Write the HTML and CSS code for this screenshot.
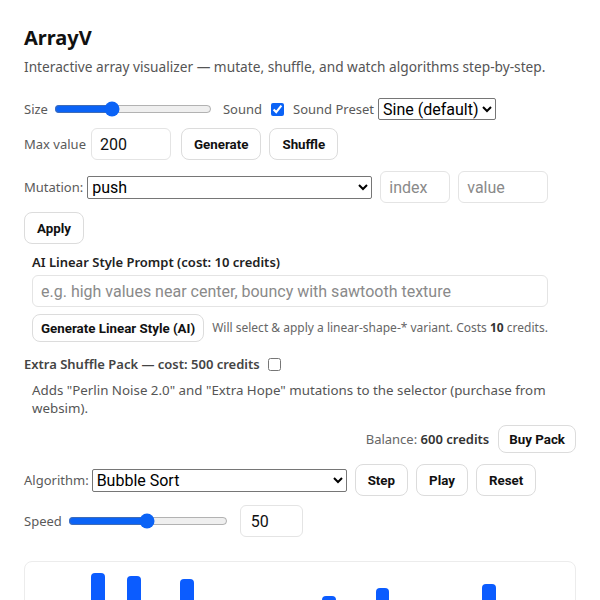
FILE: index.html
```html
<!DOCTYPE html>
<html lang="en">
<head>
<meta charset="utf-8">
<title>ArrayV</title>
<link rel="stylesheet" href="styles.css">
</head>
<body>
<main class="app">
  <h1 class="title">ArrayV</h1>
  <p class="subtitle">Interactive array visualizer — mutate, shuffle, and watch algorithms step-by-step.</p>

  <div class="row row-size">
    <span class="lbl">Size</span>
    <input type="range" class="range range-size" min="0" max="100" value="35">
    <span class="lbl lbl-sound">Sound</span>
    <input type="checkbox" class="chk chk-sound" checked>
    <span class="lbl lbl-preset">Sound Preset</span>
    <select class="sel sel-preset"><option>Sine (default)</option></select>
  </div>

  <div class="row row-gen">
    <span class="lbl">Max value</span>
    <input type="text" class="inp inp-max" value="200">
    <button class="btn btn-gen">Generate</button>
    <button class="btn btn-shuffle">Shuffle</button>
  </div>

  <div class="row row-mut">
    <span class="lbl">Mutation:</span>
    <select class="sel sel-mut"><option>push</option></select>
    <input type="text" class="inp inp-index" placeholder="index">
    <input type="text" class="inp inp-value" placeholder="value">
  </div>

  <div class="row row-apply">
    <button class="btn">Apply</button>
  </div>

  <section class="ai">
    <div class="ai-label">AI Linear Style Prompt (cost: 10 credits)</div>
    <input type="text" class="inp inp-prompt" placeholder="e.g. high values near center, bouncy with sawtooth texture">
    <div class="row ai-actions">
      <button class="btn btn-sm btn-ai">Generate Linear Style (AI)</button>
      <span class="note">Will select &amp; apply a linear-shape-* variant. Costs <b>10</b> credits.</span>
    </div>
  </section>

  <div class="row row-pack">
    <span class="pack-label">Extra Shuffle Pack — cost: 500 credits</span>
    <input type="checkbox" class="chk chk-pack">
  </div>
  <p class="pack-desc">Adds "Perlin Noise 2.0" and "Extra Hope" mutations to the selector (purchase from websim).</p>

  <div class="row row-balance">
    <span class="balance">Balance: <b>600 credits</b></span>
    <button class="btn btn-sm btn-buy">Buy Pack</button>
  </div>

  <div class="row row-algo">
    <span class="lbl">Algorithm:</span>
    <select class="sel sel-algo"><option>Bubble Sort</option></select>
    <button class="btn btn-step">Step</button>
    <button class="btn btn-play">Play</button>
    <button class="btn btn-reset">Reset</button>
  </div>

  <div class="row row-speed">
    <span class="lbl">Speed</span>
    <input type="range" class="range range-speed" min="1" max="100" value="50">
    <input type="number" class="inp inp-speed" value="50">
  </div>

  <div class="viz">
    <div class="bars">
      <div class="bar" style="height:120px"></div>
      <div class="bar" style="height:64px"></div>
      <div class="bar" style="height:210px"></div>
      <div class="bar" style="height:300px"></div>
      <div class="bar" style="height:150px"></div>
      <div class="bar" style="height:297px"></div>
      <div class="bar" style="height:88px"></div>
      <div class="bar" style="height:240px"></div>
      <div class="bar" style="height:294px"></div>
      <div class="bar" style="height:36px"></div>
      <div class="bar" style="height:180px"></div>
      <div class="bar" style="height:262px"></div>
      <div class="bar" style="height:110px"></div>
      <div class="bar" style="height:200px"></div>
      <div class="bar" style="height:72px"></div>
      <div class="bar" style="height:228px"></div>
      <div class="bar" style="height:277px"></div>
      <div class="bar" style="height:140px"></div>
      <div class="bar" style="height:52px"></div>
      <div class="bar" style="height:285px"></div>
      <div class="bar" style="height:190px"></div>
      <div class="bar" style="height:96px"></div>
      <div class="bar" style="height:250px"></div>
      <div class="bar" style="height:160px"></div>
      <div class="bar" style="height:44px"></div>
      <div class="bar" style="height:289px"></div>
      <div class="bar" style="height:130px"></div>
      <div class="bar" style="height:218px"></div>
      <div class="bar" style="height:80px"></div>
      <div class="bar" style="height:170px"></div>
    </div>
  </div>
</main>
</body>
</html>
```
FILE: styles.css
```css
html {
  scrollbar-width: none;
}

body {
  margin: 0;
  background: #fff;
  color: #222;
  font-family: "Noto Sans", "Open Sans", sans-serif;
  font-size: 13px;
  line-height: 18px;
}

.app {
  padding: 24px 24px 40px;
}

.title {
  margin: 0;
  font-size: 20px;
  line-height: 28px;
  font-weight: 700;
  color: #111;
}

.subtitle {
  margin: 6px 0 0;
  font-size: 13.7px;
  color: #555;
}

.row {
  display: flex;
  align-items: center;
}

.row input,
.row select,
.row button {
  margin: 0;
  flex-shrink: 0;
}

.lbl {
  color: #5a5a5a;
  white-space: nowrap;
}

/* controls */
.range {
  accent-color: #0b63f6;
}

.chk {
  width: 13px;
  height: 13px;
  accent-color: #0b63f6;
}

.sel {
  box-sizing: border-box;
  height: 23px;
  font-family: Roboto, "Liberation Sans", sans-serif;
  font-size: 16px;
  color: #000;
  background: #fff;
  border: 1px solid #767676;
  border-radius: 2px;
}

.inp {
  box-sizing: border-box;
  height: 32px;
  padding: 0 8px;
  font-family: Roboto, "Liberation Sans", sans-serif;
  font-size: 16px;
  color: #111;
  background: #fff;
  border: 1px solid #e4e4e4;
  border-radius: 6px;
  outline: none;
}

.inp::placeholder {
  color: #8a8a8a;
}

.btn {
  box-sizing: border-box;
  height: 32px;
  padding: 0 12px;
  font-family: Roboto, "Liberation Sans", sans-serif;
  font-size: 13.33px;
  font-weight: 700;
  color: #111;
  background: #fff;
  border: 1px solid #dcdcdc;
  border-radius: 8px;
  white-space: nowrap;
}

.btn-sm {
  height: 28px;
  padding: 0 10px;
}

.btn-ai {
  padding: 0 8px;
}

/* row 1 */
.row-size {
  margin-top: 22px;
  height: 22px;
}

.range-size {
  width: 158px;
  margin-left: 6px !important;
}

.lbl-sound {
  margin-left: 11px;
}

.chk-sound {
  margin-left: 9px !important;
}

.lbl-preset {
  margin-left: 9px;
}

.sel-preset {
  width: 118px;
  height: 22px;
  margin-left: 4px !important;
}

/* row 2 */
.row-gen {
  margin-top: 8px;
}

.inp-max {
  width: 80px;
  margin-left: 5px !important;
}

.btn-gen {
  margin-left: 10px !important;
}

.btn-shuffle {
  margin-left: 8px !important;
}

/* row 3 */
.row-mut {
  margin-top: 11px;
}

.sel-mut {
  width: 285px;
  margin-left: 4px !important;
}

.inp-index {
  width: 70px;
  margin-left: 8px !important;
}

.inp-value {
  width: 90px;
  margin-left: 8px !important;
}

.row-apply {
  margin-top: 9px;
}

/* AI section */
.ai {
  margin: 9px 0 0 8px;
  width: 516px;
}

.ai-label {
  font-weight: 600;
  color: #222;
}

.inp-prompt {
  display: block;
  width: 100%;
  margin-top: 4px;
}

.ai-actions {
  margin-top: 7px;
}

.note {
  margin-left: 8px;
  font-size: 12px;
  color: #666;
  white-space: nowrap;
}

.note b {
  color: #333;
  font-weight: 700;
}

/* pack */
.row-pack {
  margin-top: 13px;
}

.pack-label {
  font-weight: 600;
  color: #444;
}

.chk-pack {
  margin-left: 8px !important;
}

.pack-desc {
  margin: 8px 0 0 8px;
  width: 520px;
  font-size: 13.33px;
  color: #555;
}

.row-balance {
  margin-top: 8px;
  justify-content: flex-end;
}

.balance {
  color: #666;
}

.balance b {
  font-weight: 600;
  color: #333;
}

.btn-buy {
  margin-left: 9px !important;
}

/* algorithm */
.row-algo {
  margin-top: 11px;
}

.sel-algo {
  width: 255px;
  margin-left: 3px !important;
}

.btn-step {
  margin-left: 8px !important;
}

.btn-play,
.btn-reset {
  margin-left: 8px !important;
}

.row-speed {
  margin-top: 9px;
}

.range-speed {
  width: 160px;
  margin-left: 6px !important;
}

.inp-speed {
  width: 63px;
  margin-left: 12px !important;
  padding: 0 10px;
}

/* visualization */
.viz {
  margin-top: 24px;
  padding: 11px 8px 12px 13px;
  border: 1px solid #ececec;
  border-radius: 8px;
}

.bars {
  display: flex;
  align-items: flex-end;
  gap: 4px;
  height: 300px;
}

.bar {
  flex: 1;
  background: #0b5cff;
  border-radius: 4px 4px 0 0;
}
```
